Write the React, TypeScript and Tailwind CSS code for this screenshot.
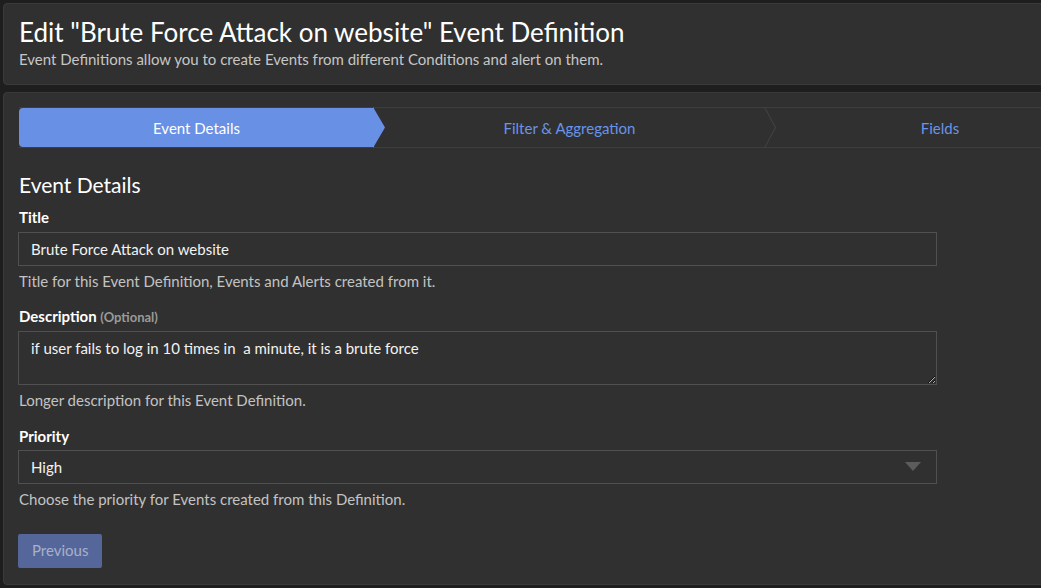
import { ChangeEvent, useState } from 'react'

const steps = [
  { label: 'Event Details', width: 'w-[355px]' },
  { label: 'Filter & Aggregation', width: 'w-[391px]' },
  { label: 'Fields', width: 'w-[350px]' },
]

export default function App() {
  const [title, setTitle] = useState('Brute Force Attack on website')
  const [description, setDescription] = useState('if user fails to log in 10 times in  a minute, it is a brute force')
  const [priority, setPriority] = useState('High')

  return (
    <div className="h-[588px] w-[1041px] overflow-hidden bg-[#1e1e1e] font-['Lato',sans-serif] text-[#eaeaea]">
      <div className="flex w-[1140px] flex-col gap-[7px] pl-[3px] pt-[3px]">
        <header className="h-[82px] rounded border border-[#3a3a3a] bg-[#303030] px-[15px] pt-[13px]">
          <h1 className="text-[26px] leading-[30px] font-normal text-white">Edit "Brute Force Attack on website" Event Definition</h1>
          <p className="mt-[3px] text-[15px] leading-[18px] text-[#c6c6c6]">Event Definitions allow you to create Events from different Conditions and alert on them.</p>
        </header>

        <section className="h-[493px] rounded border border-[#3a3a3a] bg-[#303030] px-[15px] pt-[14px]">
          <nav className="flex h-[41px] border-y border-[#3e3e3e]">
            {steps.map((step, i) => (
              <div
                key={step.label}
                className={`relative flex items-center justify-center pt-[1px] text-[15px] ${step.width} ${i === 0 ? 'rounded-l bg-[#6890e5] text-white' : 'text-[#6a94ea]'}`}
              >
                {step.label}
                {i < 2 && (
                  <svg className="absolute top-[-1px] right-[-12px] z-10" width="13" height="41" viewBox="0 0 13 41">
                    {i === 0 ? (
                      <path d="M0 0 L12 20.5 L0 41 Z" fill="#6890e5" />
                    ) : (
                      <path d="M0.5 0 L11.5 20.5 L0.5 41" fill="none" stroke="#444" strokeWidth="1" />
                    )}
                  </svg>
                )}
              </div>
            ))}
          </nav>

          <div className="-ml-px w-[919px]">
            <h2 className="mt-[24px] ml-px text-[21px] leading-[25px] font-normal text-white">Event Details</h2>

            <label className="mt-[11px] ml-px block text-[15px] leading-[18px] font-bold text-white">Title</label>
            <input
              value={title}
              onChange={(e: ChangeEvent<HTMLInputElement>) => setTitle(e.target.value)}
              className="mt-[6px] block h-[34px] w-full border border-[#505050] bg-[#303030] px-[12px] text-[15px] text-[#f2f2f2] outline-none"
            />
            <p className="mt-[6px] ml-px text-[15px] leading-[18px] text-[#c3c3c3]">Title for this Event Definition, Events and Alerts created from it.</p>

            <label className="mt-[17px] ml-px block text-[15px] leading-[18px] font-bold text-white">
              Description <span className="text-[13px] text-[#9a9a9a]">(Optional)</span>
            </label>
            <textarea
              value={description}
              onChange={(e: ChangeEvent<HTMLTextAreaElement>) => setDescription(e.target.value)}
              className="mt-[5px] block h-[54px] w-full resize-y border border-[#505050] bg-[#303030] px-[12px] py-[6px] text-[15px] leading-[20px] text-[#f2f2f2] outline-none"
            />
            <p className="mt-[6px] ml-px text-[15px] leading-[18px] text-[#c3c3c3]">Longer description for this Event Definition.</p>

            <label className="mt-[18px] ml-px block text-[15px] leading-[18px] font-bold text-white">Priority</label>
            <div className="relative mt-[5px]">
              <select
                value={priority}
                onChange={(e: ChangeEvent<HTMLSelectElement>) => setPriority(e.target.value)}
                className="block h-[34px] w-full appearance-none border border-[#505050] bg-[#303030] px-[12px] text-[15px] text-[#f2f2f2] outline-none"
              >
                <option>Low</option>
                <option>Normal</option>
                <option>High</option>
              </select>
              <svg className="pointer-events-none absolute top-[12px] right-[16px]" width="16" height="10" viewBox="0 0 16 10">
                <path d="M0 0 H16 L8 9 Z" fill="#5c5c5c" />
              </svg>
            </div>
            <p className="mt-[6px] ml-px text-[15px] leading-[18px] text-[#c3c3c3]">Choose the priority for Events created from this Definition.</p>

            <button
              disabled
              className="mt-[26px] h-[34px] rounded-[2px] bg-[#55669a] px-[14px] pb-[1px] text-[15px] text-[#a9b1c8]"
            >
              Previous
            </button>
          </div>
        </section>
      </div>
    </div>
  )
}
